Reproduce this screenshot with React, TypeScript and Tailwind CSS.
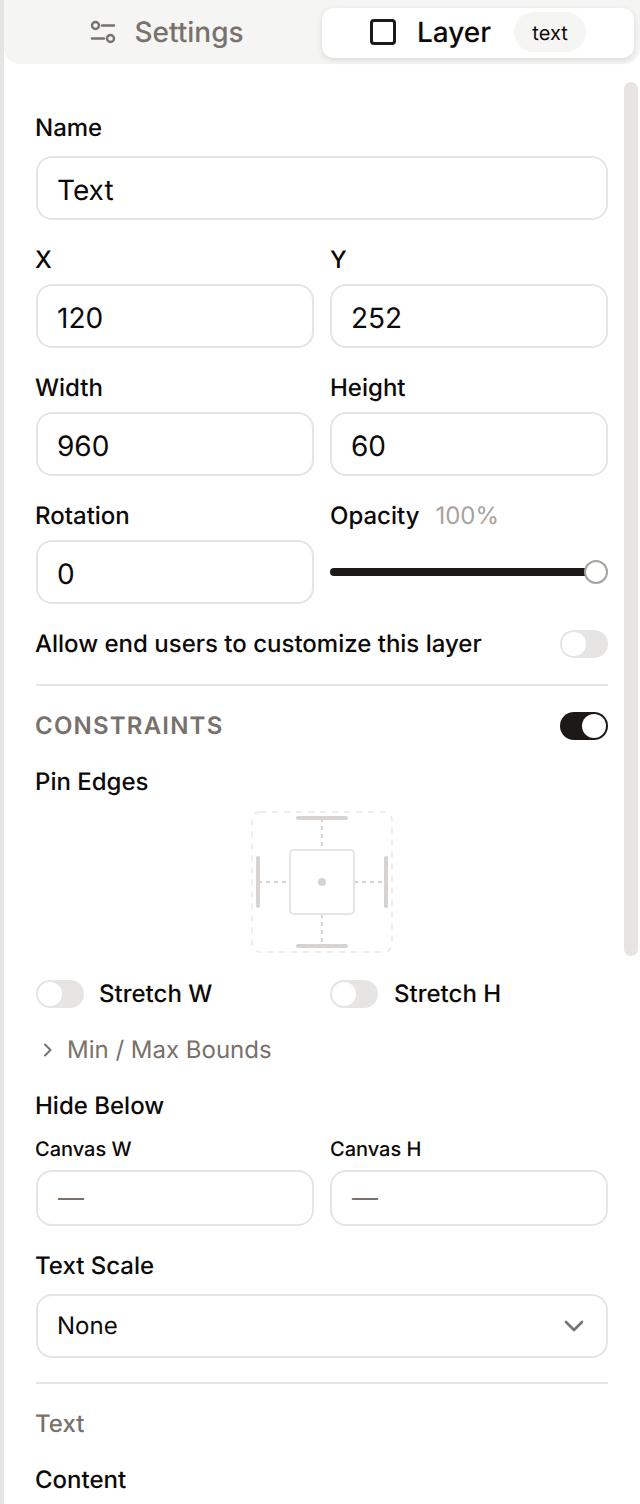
import React from "react";

const font = { fontFamily: "Inter, 'Liberation Sans', sans-serif" };

function Field({ label, value, first = false, right = false }: { label: string; value: string; first?: boolean; right?: boolean }) {
  return (
    <div>
      <div className={`${right ? "" : "-ml-px"} h-8 text-[24px] leading-8 font-medium text-[#0c0a09]`}>{label}</div>
      <div className={`${first ? "mt-3" : "mt-2"} flex h-16 items-center rounded-[16px] border-2 border-[#e7e5e4] bg-white pl-[19px] pr-5 pt-1 text-[28px] text-[#0c0a09]`}>
        {value}
      </div>
    </div>
  );
}

function Toggle({ on = false }: { on?: boolean }) {
  return (
    <div className={`flex h-7 w-12 shrink-0 items-center rounded-full p-[2px] ${on ? "justify-end bg-[#1c1917]" : "justify-start bg-[#e7e5e4]"}`}>
      <div className="h-6 w-6 rounded-full bg-white" />
    </div>
  );
}

function SmallField({ label, right = false }: { label: string; right?: boolean }) {
  return (
    <div>
      <div className={`${right ? "" : "-ml-px"} h-7 text-[20px] leading-[30px] font-medium text-[#0c0a09]`}>{label}</div>
      <div className="mt-2 flex h-14 items-center rounded-[16px] border-2 border-[#e7e5e4] bg-white px-5 text-[26px] text-[#78716c]">
        —
      </div>
    </div>
  );
}

function PinWidget() {
  return (
    <svg width="144" height="144" viewBox="0 0 144 144" fill="none">
      <rect x="2" y="2" width="140" height="140" rx="8" stroke="#efedec" strokeWidth="2" strokeDasharray="6 6" />
      <g stroke="#d6d3d1" strokeWidth="2" strokeDasharray="4 4">
        <line x1="72" y1="8" x2="72" y2="40" />
        <line x1="72" y1="104" x2="72" y2="136" />
        <line x1="8" y1="72" x2="40" y2="72" />
        <line x1="104" y1="72" x2="136" y2="72" />
      </g>
      <g fill="#d6d3d1">
        <rect x="46" y="6" width="52" height="4" rx="2" />
        <rect x="46" y="134" width="52" height="4" rx="2" />
        <rect x="6" y="46" width="4" height="52" rx="2" />
        <rect x="134" y="46" width="4" height="52" rx="2" />
      </g>
      <rect x="40" y="40" width="64" height="64" rx="4" fill="#fff" stroke="#e7e5e4" strokeWidth="2" />
      <circle cx="72" cy="72" r="4" fill="#d6d3d1" />
    </svg>
  );
}

export default function App() {
  return (
    <div className="h-[1504px] w-[640px] overflow-hidden bg-[#e7e5e4] pl-1 [text-rendering:geometricPrecision]" style={font}>
      <div className="relative h-full bg-white">
        <div className="flex h-16 rounded-b-[16px] bg-[#f5f5f4] py-2 pl-[7px] pr-[6px]">
          <div className="flex h-[48px] flex-1 items-center justify-center gap-[17px] text-[28px] font-medium text-[#78716c]">
            <svg width="28" height="28" viewBox="0 0 28 28" fill="none" stroke="#78716c" strokeWidth="2.4" strokeLinecap="round">
              <circle cx="6.5" cy="7.5" r="3.5" />
              <line x1="13" y1="7.5" x2="25" y2="7.5" />
              <circle cx="21.5" cy="20.5" r="3.5" />
              <line x1="3" y1="20.5" x2="15" y2="20.5" />
            </svg>
            Settings
          </div>
          <div className="flex h-[50px] w-[312px] items-center justify-center gap-4 rounded-[12px] bg-white pb-[2px] text-[28px] font-medium text-[#0c0a09] shadow-[0_2px_6px_rgba(0,0,0,0.12)]">
            <div className="h-[26px] w-[26px] rounded-[4px] border-[3px] border-[#1c1917]" />
            <span className="ml-[5px]">Layer</span>
            <span className="ml-[7px] flex h-10 w-[72px] items-center justify-center rounded-full bg-[#f5f5f4] pt-[2px] text-[20px] font-normal">text</span>
          </div>
        </div>

        <div className="absolute left-[620px] top-[82px] h-[874px] w-[14px] rounded-full bg-[#e7e5e4]" />

        <div className="ml-8 w-[572px] pt-12">
          <Field label="Name" value="Text" first />
          <div className="mt-6 grid grid-cols-2 gap-x-4 gap-y-6">
            <Field label="X" value="120" />
            <Field label="Y" value="252" right />
            <Field label="Width" value="960" />
            <Field label="Height" value="60" right />
            <Field label="Rotation" value="0" />
            <div>
              <div className="flex h-8 items-center gap-4 text-[24px] font-medium text-[#0c0a09]">
                Opacity <span className="font-normal text-[#a8a29e]">100%</span>
              </div>
              <div className="mt-2 flex h-16 items-center">
                <div className="h-2 flex-1 rounded-l-full bg-[#1c1917]" />
                <div className="-ml-1 h-6 w-6 rounded-full border-2 border-[#a8a29e] bg-white" />
              </div>
            </div>
          </div>
          <div className="mt-6 flex h-8 items-center justify-between text-[24px] font-medium text-[#0c0a09]">
            <span className="-ml-px">Allow end users to customize this layer</span>
            <Toggle />
          </div>
          <div className="mt-6 h-[2px] bg-[#e7e5e4]" />
          <div className="mt-6 flex h-8 items-center justify-between text-[24px] font-semibold tracking-[1.2px] text-[#78716c]">
            <span className="-ml-px">CONSTRAINTS</span>
            <Toggle on />
          </div>
          <div className="mt-6 -ml-px h-8 text-[24px] leading-8 font-medium text-[#0c0a09]">Pin Edges</div>
          <div className="mt-3 flex justify-center">
            <PinWidget />
          </div>
          <div className="mt-6 grid grid-cols-2 gap-x-4">
            <div className="flex h-8 items-center gap-[15px] text-[24px] font-medium text-[#0c0a09]">
              <Toggle />
              Stretch W
            </div>
            <div className="flex h-8 items-center gap-4 text-[24px] font-medium text-[#0c0a09]">
              <Toggle />
              Stretch H
            </div>
          </div>
          <div className="mt-6 flex h-8 items-center gap-[11px] pl-1 text-[24px] font-normal text-[#78716c]">
            <svg width="16" height="16" viewBox="0 0 16 16" fill="none" stroke="#78716c" strokeWidth="2" strokeLinecap="round" strokeLinejoin="round">
              <path d="M5 2.5 L10.5 8 L5 13.5" />
            </svg>
            Min / Max Bounds
          </div>
          <div className="mt-6 -ml-px h-8 text-[24px] leading-8 font-medium text-[#0c0a09]">Hide Below</div>
          <div className="mt-3 grid grid-cols-2 gap-x-4">
            <SmallField label="Canvas W" />
            <SmallField label="Canvas H" right />
          </div>
          <div className="mt-6 -ml-px h-8 text-[24px] leading-8 font-medium text-[#0c0a09]">Text Scale</div>
          <div className="mt-3 flex h-16 items-center justify-between rounded-[16px] border-2 border-[#e7e5e4] pl-[19px] pr-5 text-[24px] text-[#0c0a09]">
            None
            <svg width="24" height="24" viewBox="0 0 24 24" fill="none" stroke="#78716c" strokeWidth="2.6" strokeLinecap="round" strokeLinejoin="round">
              <path d="M4 8 L12 16 L20 8" />
            </svg>
          </div>
          <div className="mt-6 h-[2px] bg-[#e7e5e4]" />
          <div className="mt-6 -ml-px h-8 text-[24px] leading-8 font-medium text-[#78716c]">Text</div>
          <div className="mt-6 -ml-px h-8 text-[24px] leading-8 font-medium text-[#0c0a09]">Content</div>
        </div>
      </div>
    </div>
  );
}
